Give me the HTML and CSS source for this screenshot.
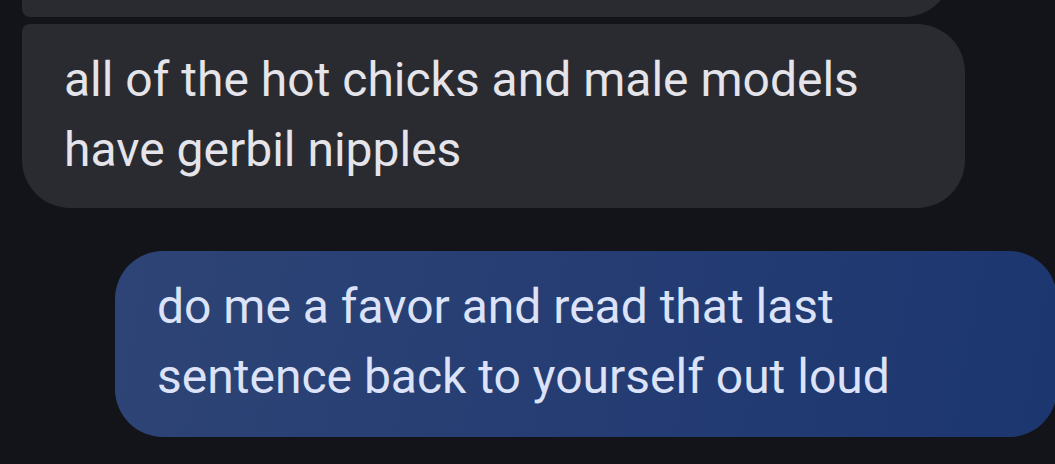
FILE: index.html
```html
<!DOCTYPE html>
<html lang="en">
<head>
    <meta charset="UTF-8" />
    <title>Messages</title>
    <link rel="stylesheet" href="styles.css">
</head>
<body>
    <div class="thread">
        <div class="bubble incoming first"></div>
        <div class="bubble incoming last">
            <p>all of the hot chicks and male models<br>have gerbil nipples</p>
        </div>
        <div class="bubble outgoing">
            <p>do me a favor and read that last<br>sentence back to yourself out loud</p>
        </div>
    </div>
</body>
</html>
```

FILE: styles.css
```css
html, body {
    margin: 0;
    padding: 0;
    background: #131419;
    overflow: hidden;
}
body {
    width: 1055px;
    height: 464px;
    font-family: Roboto, "Noto Sans", sans-serif;
}
.thread {
    width: 1057px;
    display: flex;
    flex-direction: column;
    margin-top: -120px;
}
.bubble {
    box-sizing: border-box;
    border-radius: 48px;
}
.bubble p {
    margin: 0;
    font-size: 48px;
    line-height: 70px;
    letter-spacing: 0;
}
.incoming {
    background: #2a2b30;
    color: #e4e4ea;
    margin-left: 22px;
}
.incoming.first {
    width: 930px;
    height: 137px;
    border-bottom-left-radius: 8px;
}
.incoming.last {
    width: 943px;
    margin-top: 7px;
    padding: 21px 30px 23px 42px;
    border-top-left-radius: 8px;
}
.outgoing {
    align-self: flex-end;
    width: 942px;
    margin-top: 43px;
    padding: 21px 30px 25px 42px;
    background: linear-gradient(100deg, #2e4476 0%, #253d73 50%, #1c3670 100%);
    color: #dce3f8;
}
```
